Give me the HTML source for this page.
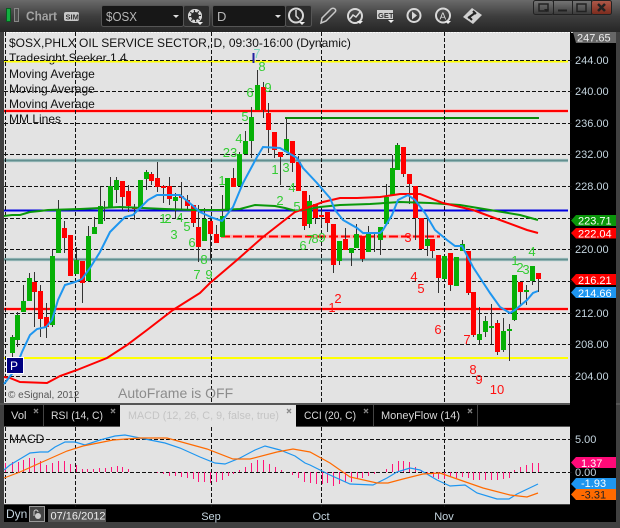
<!DOCTYPE html>
<html><head><meta charset="utf-8"><style>
html,body{margin:0;padding:0;background:#3c3c3c}
svg{display:block}
text{font-family:"Liberation Sans",sans-serif}
</style></head><body>
<svg xmlns="http://www.w3.org/2000/svg" width="620" height="528" viewBox="0 0 620 528">
<defs>
<linearGradient id="tb" x1="0" y1="0" x2="0" y2="1"><stop offset="0" stop-color="#6a6a6a"/><stop offset=".5" stop-color="#3e3e3e"/><stop offset="1" stop-color="#262626"/></linearGradient>
<linearGradient id="wb" x1="0" y1="0" x2="0" y2="1"><stop offset="0" stop-color="#777"/><stop offset="1" stop-color="#3a3a3a"/></linearGradient>
<linearGradient id="wr" x1="0" y1="0" x2="0" y2="1"><stop offset="0" stop-color="#b05a4a"/><stop offset="1" stop-color="#7a2a1c"/></linearGradient>
</defs>
<rect width="620" height="528" fill="#404040"/>
<rect width="620" height="32" fill="url(#tb)"/>
<!-- toolbar -->
<rect x="6.5" y="8.5" width="4" height="13" fill="#12b040" stroke="#0a5a22"/>
<rect x="14.5" y="8.5" width="4" height="13" fill="#4c4c4c" stroke="#888"/>
<text x="26" y="20.5" font-size="13" font-weight="bold" fill="#a2a2a2" textLength="31" lengthAdjust="spacingAndGlyphs">Chart</text>
<rect x="64" y="12" width="15" height="9" rx="2" fill="#c8c8c8"/>
<text x="65.5" y="19.5" font-size="7.5" font-weight="bold" fill="#333">SIM</text>
<rect x="101.5" y="5.5" width="82" height="21" rx="2" fill="#171717" stroke="#555"/>
<text x="106" y="21" font-size="13" fill="#b8b8b8" textLength="31" lengthAdjust="spacingAndGlyphs">$OSX</text>
<path d="M173 15h6l-3 3z" fill="#ddd"/>
<rect x="183.5" y="5.5" width="26" height="21" rx="2" fill="#2c2c2c" stroke="#555"/>
<circle cx="195" cy="16" r="5.5" fill="none" stroke="#d8d8d8" stroke-width="3" stroke-dasharray="3 1.3"/>
<circle cx="195" cy="16" r="6.5" fill="none" stroke="#d8d8d8" stroke-width="1"/>
<path d="M197 22h6l-3 3z" fill="#eee"/>
<rect x="212.5" y="5.5" width="73" height="21" rx="2" fill="#171717" stroke="#555"/>
<text x="217" y="21" font-size="13" fill="#b8b8b8">D</text>
<path d="M275 15h6l-3 3z" fill="#ddd"/>
<rect x="285.5" y="5.5" width="26" height="21" rx="2" fill="#2c2c2c" stroke="#555"/>
<circle cx="296" cy="15.5" r="7" fill="none" stroke="#d8d8d8" stroke-width="2"/>
<path d="M296 10v6l3 3" fill="none" stroke="#d8d8d8" stroke-width="1.5"/>
<path d="M299 22h6l-3 3z" fill="#eee"/>
<path d="M321 23l1-5 9-9c1-1 3-1 4 0s1 2 0 3l-9 9z" fill="none" stroke="#c8c8c8" stroke-width="1.5"/>
<circle cx="355" cy="16" r="7" fill="none" stroke="#d8d8d8" stroke-width="2"/>
<path d="M350 19l3-4 3 2 4-5" fill="none" stroke="#d8d8d8" stroke-width="1.5"/>
<path d="M357 21h6l-3 3z" fill="#eee"/>
<rect x="377" y="10" width="16" height="9" fill="#d0d0d0"/>
<text x="378" y="18" font-size="7.5" font-weight="bold" fill="#333">GET</text>
<path d="M388 20h6l-3 3z" fill="#eee"/>
<circle cx="414" cy="15.5" r="6.5" fill="none" stroke="#d8d8d8" stroke-width="2"/>
<path d="M412 11.5l5 4-5 4z" fill="#d8d8d8"/>
<circle cx="443" cy="15.5" r="7" fill="none" stroke="#d8d8d8" stroke-width="2"/>
<text x="439.5" y="19.5" font-size="10" fill="#d8d8d8">A</text>
<path d="M445 21h6l-3 3z" fill="#eee"/>
<path d="M463 17l9-9 10 7-9 9z" fill="#d0d0d0"/>
<path d="M468 18l7-5 M473 11l3 3 M469 17l3 3" stroke="#222" stroke-width="2" fill="none"/>
<!-- window buttons -->
<rect x="533.5" y="0.5" width="20" height="14" rx="2" fill="url(#wb)" stroke="#222"/>
<rect x="553.5" y="0.5" width="19" height="14" fill="url(#wb)" stroke="#222"/>
<rect x="572.5" y="0.5" width="19" height="14" fill="url(#wb)" stroke="#222"/>
<rect x="591.5" y="0.5" width="20" height="14" rx="2" fill="url(#wr)" stroke="#222"/>
<path d="M539 4h9v7h-9z" fill="none" stroke="#222" stroke-width="1.5"/><path d="M544 9h5l-2.500 3z" fill="#222"/>
<path d="M558 10.500h9" stroke="#222" stroke-width="2"/>
<path d="M577 4h9v7.500h-9z" fill="none" stroke="#222" stroke-width="1.500"/>
<path d="M598 4l7 7M605 4l-7 7" stroke="#222" stroke-width="2.500"/>

<!-- price plot -->
<rect x="4" y="32" width="566" height="371" fill="#e3e3e3"/>
<rect x="570" y="32" width="46" height="371" fill="#000"/>
<path d="M4 32.500H616" stroke="#fff" stroke-dasharray="2 1" opacity=".8"/>
<text x="9" y="47" font-size="12" fill="#111">$OSX,PHLX OIL SERVICE SECTOR, D, 09:30-16:00 (Dynamic)</text>
<text x="9" y="62" font-size="12" fill="#111">Tradesight Seeker 1.4</text>
<text x="9" y="78" font-size="12" fill="#111">Moving Average</text>
<text x="9" y="93" font-size="12" fill="#111">Moving Average</text>
<text x="9" y="108" font-size="12" fill="#111">Moving Average</text>
<text x="9" y="123" font-size="12" fill="#111">MM Lines</text>
<!-- horizontal levels -->
<g fill="none">
<path d="M4 61.500H568" stroke="#ffff00" stroke-width="2"/>
<path d="M4 358H568" stroke="#ffff00" stroke-width="2"/>
<path d="M4 111H568M4 309H568" stroke="#ffb0b0" stroke-width="3.500"/>
<path d="M4 111H568M4 309H568" stroke="#ff0000" stroke-width="2"/>
<path d="M4 160.500H568M4 259.500H568" stroke="#b8d0d0" stroke-width="3.500"/>
<path d="M4 160.500H568M4 259.500H568" stroke="#628f8f" stroke-width="2"/>
<path d="M285 118H539" stroke="#0a8a0a" stroke-width="2"/>
<path d="M4 210.500H568" stroke="#0000e0" stroke-width="2"/>
<path d="M221 236.500H440" stroke="#ffb0b0" stroke-width="3.500"/>
<path d="M221 236.500H440" stroke="#ff0000" stroke-width="2" stroke-dasharray="9 3"/>
</g>
<!-- grid -->
<g fill="none" stroke="#111" stroke-dasharray="4 2">
<path d="M4 60.500H574M4 91.500H574M4 123.500H574M4 154.500H574M4 186.500H574M4 218.500H574M4 249.500H574M4 281.500H574M4 313.500H574M4 344.500H574M4 376.500H574"/>
<path d="M5.500 32V403M75.500 32V403M211.500 32V403M321.500 32V403M444.500 32V403"/>
</g>
<!-- wicks -->
<path fill="none" stroke="#333" d="M12.500 335V372M17.500 312V347M23.500 285V312M29.500 273V301M34.500 272V327M40.500 285V337M46.500 303V338M52.500 250V327M58.500 200V253M64.500 221V253M70.500 235V276M76.500 247V274M82.500 261V303M88.500 226V281M94.500 217V234M100.500 187V224M104.500 201V221M110.500 177V207M116.500 177V203M122.500 181V210M128.500 185V212M134.500 204V220M140.500 180V208M146.500 170V190M151.500 172V185M157.500 162V192M163.500 185V203M169.500 177V205M175.500 193V219M181.500 182V210M187.500 195V210M193.500 205V227M198.500 205V262M204.500 208V241M210.500 217V260M216.500 225V243M222.500 195V237M227.500 195V210M233.500 168V187M239.500 152V186M245.500 131V154M251.500 107V158M257.500 70V110M263.500 82V118M268.500 103V153M274.500 132V158M280.500 152V185M286.500 118V152M292.500 141V172M298.500 156V191M304.500 191V230M309.500 195V228M315.500 204V224M321.500 210V225M327.500 212V232M333.500 224V273M339.500 241V265M345.500 228V250M351.500 248V266M356.500 224V248M362.500 236V262M368.500 226V252M374.500 233V252M380.500 227V255M386.500 184V224M392.500 155V195M397.500 143V170M403.500 147V177M409.500 174V204M415.500 186V240M421.500 218V241M427.500 219V256M432.500 239V258M438.500 255V293M444.500 256V279M450.500 253V291M456.500 257V286M462.500 240V251M468.500 251V295M473.500 292V337M479.500 307V344M485.500 316V337M491.500 304V344M497.500 320V355M503.500 318V352M509.500 324V361M514.500 275V321M520.500 282V305M526.500 285V305M532.500 266V285M538.500 273V292"/>
<!-- red bodies -->
<path fill="none" stroke="#ff0000" stroke-width="5" d="M34.500 282V292M40.500 291V319M46.500 317V327M64.500 228V238M70.500 235V276M82.500 261V283M122.500 181V197M128.500 191V206M134.500 207V209M151.500 174V181M157.500 178V187M163.500 186V188M169.500 186V199M181.500 196V198M187.500 200V206M193.500 205V223M198.500 227V247M210.500 221V234M216.500 234V243M233.500 178V187M263.500 87V110M268.500 113V130M274.500 132V150M280.500 152V157M292.500 141V163M298.500 162V191M304.500 191V226M315.500 204V218M321.500 215V217M327.500 212V223M333.500 224V265M345.500 239V250M362.500 236V259M403.500 147V174M409.500 174V184M415.500 186V218M421.500 218V249M432.500 239V251M438.500 255V278M450.500 253V285M468.500 251V293M473.500 292V335M497.500 323V352M520.500 282V292M538.500 273V279"/>
<!-- green bodies -->
<path fill="none" stroke="#06b006" stroke-width="5" d="M12.500 337V353M17.500 315V340M23.500 301V312M29.500 278V301M52.500 256V325M58.500 209V253M76.500 260V274M88.500 236V281M94.500 227V234M100.500 206V224M110.500 186V207M116.500 180V190M140.500 180V207M146.500 172V179M175.500 197V201M204.500 219V241M222.500 216V237M227.500 178V210M239.500 154V186M245.500 141V154M251.500 117V141M257.500 85V110M286.500 139V152M309.500 201V224M339.500 241V261M351.500 248V253M356.500 234V248M368.500 234V252M380.500 227V240M386.500 197V224M392.500 168V195M397.500 145V170M427.500 239V246M444.500 256V279M456.500 257V286M462.500 244V251M479.500 334V340M485.500 321V332M491.500 326V328M503.500 331V350M509.500 329V331M514.500 275V320M526.500 290V292M532.500 266V281"/>
<path d="M253.500 53v10" stroke="#2020a0" stroke-width="2"/>
<!-- moving averages -->
<polyline fill="none" stroke="#0a980a" stroke-width="2" points="4,216 12,215 20,215 30,212 40,211 48,210 80,209 120,207 165,209 195,210 220,210 240,209 255,205 275,206 285,208 296,211 320,207 340,205 370,204 400,202 430,203 460,205 490,210 520,215 538,220"/>
<polyline fill="none" stroke="#ff0000" stroke-width="2" points="4,377 10,378 20,382 47,383 60,376 77,370 107,358 127,345 147,330 173,310 200,293 210,283 237,260 263,237 295,212 315,205 323,202 340,198 357,198 380,197 400,194 420,194 443,203 473,210 500,220 527,230 538,233"/>
<polyline fill="none" stroke="#1e96f0" stroke-width="2" points="4,384 15,370 22,352 30,335 37,329 46,327 52,320 58,300 65,285 75,282 82,279 90,268 100,252 110,232 117,225 125,217 133,215 140,208 148,200 157,195 180,195 192,205 200,212 213,218 222,221 233,207 243,183 257,157 263,147 280,148 297,158 303,168 317,183 330,198 335,210 343,220 357,228 363,233 380,233 383,230 392,215 398,200 408,195 415,200 425,213 435,230 447,240 455,246 462,246 473,267 490,293 500,307 510,313 515,310 527,300 533,293 538,291"/>
<!-- seeker numbers green -->
<g font-size="13" fill="#33cc33" text-anchor="middle">
<text x="257" y="58" fill="#7fdcc0">7</text><text x="262" y="71">8</text><text x="250" y="97">6</text><text x="268" y="92">9</text><text x="245" y="121">5</text><text x="239" y="143">4</text><text x="230" y="157">23</text><text x="222" y="185">1</text><text x="275" y="174">1</text><text x="286" y="172">3</text><text x="292" y="192">4</text><text x="280" y="205">2</text><text x="297" y="211">5</text><text x="303" y="250">6</text><text x="310" y="244">7</text><text x="315" y="243">8</text><text x="322" y="242">9</text><text x="204" y="264">8</text><text x="209" y="279">9</text><text x="197" y="279">7</text><text x="163" y="223">1</text><text x="168" y="223">2</text><text x="180" y="222">4</text><text x="174" y="239">3</text><text x="187" y="231">5</text><text x="192" y="247">6</text><text x="532" y="256">4</text><text x="515" y="265">1</text><text x="520" y="272">2</text><text x="526" y="274">3</text>
</g>
<g font-size="13" fill="#ff1010" text-anchor="middle">
<text x="332" y="312">1</text><text x="338" y="303">2</text><text x="408" y="242">3</text><text x="414" y="281">4</text><text x="421" y="293">5</text><text x="438" y="334">6</text><text x="467" y="344">7</text><text x="473" y="374">8</text><text x="479" y="384">9</text><text x="497" y="394">10</text>
</g>
<rect x="6.500" y="357.500" width="17" height="16" fill="#000080" stroke="#fff"/>
<text x="10" y="370" font-size="12" fill="#fff">P</text>
<text x="8" y="398" font-size="10" fill="#555">© eSignal, 2012</text>
<text x="118" y="398" font-size="14" fill="#8c8c8c">AutoFrame is OFF</text>
<!-- price axis -->
<g font-size="11" fill="#c4d4de">
<text x="575" y="64">244.00</text><text x="575" y="95">240.00</text><text x="575" y="127">236.00</text><text x="575" y="158">232.00</text><text x="575" y="190">228.00</text><text x="575" y="253">220.00</text><text x="575" y="317">212.00</text><text x="575" y="348">208.00</text><text x="575" y="380">204.00</text>
</g>
<path d="M573 32H616V43H576z" fill="#666"/><text x="577" y="41.500" font-size="11" fill="#eee">247.65</text>
<path d="M571 220.500L576 215H616V226H576z" fill="#0a960a"/><text x="578" y="224.500" font-size="11" fill="#fff">223.71</text>
<path d="M571 233L576 228H616V238.500H576z" fill="#ff0000"/><text x="578" y="237.500" font-size="11" fill="#fff">222.04</text>
<path d="M571 279.500L576 274H616V285H576z" fill="#ff0000"/><text x="578" y="284" font-size="11" fill="#fff">216.21</text>
<path d="M571 292.500L576 287H616V298H576z" fill="#1e96f0"/><text x="578" y="297" font-size="11" fill="#fff">214.66</text>
<!-- tabs -->
<rect x="0" y="403" width="620" height="2" fill="#555"/>
<rect x="4" y="405" width="566" height="22" fill="#000"/>
<rect x="570" y="403" width="46" height="24" fill="#000"/>
<path d="M43.500 405V427M373.500 405V427M477.500 405V427" stroke="#444"/>
<rect x="120" y="405" width="176" height="22" fill="#e3e3e3"/>
<path d="M4 426.500H120M296 426.500H570" stroke="#555"/>
<g font-size="11">
<text x="11" y="419" fill="#d8d8d8" textLength="15.500" lengthAdjust="spacingAndGlyphs">Vol</text>
<text x="51" y="419" fill="#d8d8d8" textLength="52" lengthAdjust="spacingAndGlyphs">RSI (14, C)</text>
<text x="128" y="419" fill="#c4c4c4" textLength="151" lengthAdjust="spacingAndGlyphs">MACD (12, 26, C, 9, false, true)</text>
<text x="304" y="419" fill="#d8d8d8" textLength="52" lengthAdjust="spacingAndGlyphs">CCI (20, C)</text>
<text x="381" y="419" fill="#d8d8d8" textLength="79" lengthAdjust="spacingAndGlyphs">MoneyFlow (14)</text>
</g>
<g stroke="#888" stroke-width="1.300">
<path d="M34 409l4 4m0-4l-4 4M111 409l4 4m0-4l-4 4M287 409l4 4m0-4l-4 4M364 409l4 4m0-4l-4 4M468 409l4 4m0-4l-4 4"/>
</g>
<!-- MACD -->
<rect x="4" y="427" width="566" height="77" fill="#e3e3e3"/>
<rect x="570" y="427" width="46" height="95" fill="#000"/>
<rect x="4" y="504" width="566" height="18" fill="#000"/>
<rect x="4" y="504" width="566" height="1" fill="#444"/>
<text x="9" y="443" font-size="12" fill="#111">MACD</text>
<g fill="none" stroke="#111" stroke-dasharray="4 2">
<path d="M4 439.500H574M4 472.500H574"/>
<path d="M5.500 427V504M75.500 427V507M211.500 427V507M321.500 427V507M444.500 427V507"/>
</g>
<path fill="none" stroke="#ff1478" stroke-width="1" d="M5.500 463V472M12.500 462V472M18.500 462V472M23.500 460V472M29.500 458V472M34.500 458V472M40.500 461V472M46.500 465V472M52.500 463V472M58.500 461V472M64.500 461V472M70.500 464V472M76.500 465V472M82.500 469V472M87.500 469V472M93.500 469V472M99.500 468V472M105.500 468V472M111.500 467V472M117.500 466V472M122.500 467V472M128.500 469V472M157.500 472V473M163.500 472V474M169.500 472V476M175.500 472V476M181.500 472V477M187.500 472V478M193.500 472V479M198.500 472V482M204.500 472V482M210.500 472V483M216.500 472V482M222.500 472V480M228.500 472V476M233.500 472V474M239.500 470V472M245.500 467V472M251.500 463V472M257.500 460V472M263.500 460V472M269.500 464V472M275.500 467V472M281.500 470V472M292.500 472V475M298.500 472V478M304.500 472V482M310.500 472V483M316.500 472V484M322.500 472V484M327.500 472V483M333.500 472V486M339.500 472V484M345.500 472V482M351.500 472V482M357.500 472V478M362.500 472V478M368.500 472V476M374.500 472V474M386.500 469V472M392.500 464V472M398.500 461V472M403.500 461V472M409.500 462V472M415.500 467V472M421.500 470V472M427.500 472V474M433.500 472V477M438.500 472V479M444.500 472V479M450.500 472V477M456.500 472V478M462.500 472V477M468.500 472V478M473.500 472V480M479.500 472V480M485.500 472V480M491.500 472V480M497.500 472V480M503.500 472V479M509.500 472V478M514.500 470V472M520.500 467V472M526.500 465V472M532.500 463V472M538.500 463V472"/>
<polyline fill="none" stroke="#1e96f0" stroke-width="1.200" points="4,470 10,465 20,459 30,453 40,452 48,452 55,447 65,442 75,442 85,445 100,440 115,436 125,435 135,437 165,443 180,448 200,457 215,463 225,464 240,458 255,450 265,446 280,450 295,456 305,463 310,465 330,475 350,484 373,485 387,478 397,472 410,468 420,470 437,480 450,486 465,485 477,493 497,499 509,499 517,494 538,484"/>
<polyline fill="none" stroke="#ff6a00" stroke-width="1.200" points="4,478 20,472 40,463 67,451 83,446 113,440 140,438 167,438 207,449 233,459 250,459 277,452 293,449 310,452 330,463 350,477 377,483 388,483 403,479 423,474 440,473 460,480 483,488 510,495 527,497 538,493"/>
<g font-size="11" fill="#c4d4de">
<text x="575" y="443">5.00</text><text x="575" y="476">0.00</text>
</g>
<path d="M571 462.500L576 457H616V468H576z" fill="#ff0a78"/><text x="581" y="467" font-size="11" fill="#fff">1.37</text>
<path d="M571 484L576 478H616V489H576z" fill="#1e96f0"/><text x="581" y="487" font-size="11" fill="#fff">-1.93</text>
<path d="M571 494.500L576 489H616V500H576z" fill="#ff6a00"/><text x="581" y="498.500" font-size="11" fill="#222">-3.31</text>
<!-- date axis -->
<text x="6" y="518" font-size="12" fill="#c4d4de">Dyn</text>
<rect x="29.500" y="506.500" width="15" height="15" fill="#444" stroke="#999"/>
<circle cx="38" cy="516" r="3" fill="#ccc"/><path d="M34 516v-4a2 2 0 014 0" fill="none" stroke="#ccc"/>
<rect x="48" y="509" width="58" height="13" fill="#555"/>
<text x="50.500" y="519.500" font-size="11" fill="#eee">07/16/2012</text>
<g font-size="11" fill="#c4d4de" text-anchor="middle">
<text x="211" y="520">Sep</text><text x="321" y="520">Oct</text><text x="444" y="520">Nov</text>
</g>
</svg>
</body></html>
